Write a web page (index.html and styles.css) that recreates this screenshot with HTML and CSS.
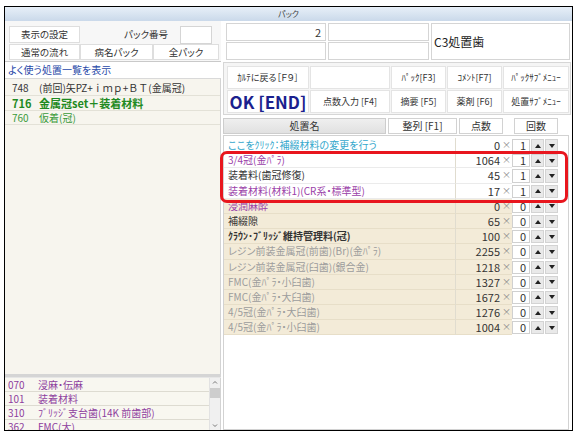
FILE: index.html
```html
<!doctype html>
<html lang="ja">
<head>
    <meta charset="UTF-8">
    <title>パック</title>
    <link rel="stylesheet" href="styles.css">
</head>
<body>
    <div class="window">
        <div class="titleBar">パック</div>
        <div class="packBody">
            <div class="leftPane">
                <div class="setRow">
                    <div class="btn setBtn">表示の設定</div>
                    <div class="packLabel">パック番号</div>
                    <div class="field packNo"></div>
                </div>
                <div class="tabRow">
                    <div class="btn tabA">通常の流れ</div>
                    <div class="btn tabB">病名パック</div>
                    <div class="btn tabC">全パック</div>
                </div>
                <div class="favLink">よく使う処置一覧を表示</div>
                <div class="favList">
                    <div class="favItem"><span class="code">748</span><span class="wide">(前回)矢PZ+ｉｍｐ+ＢＴ(金属冠)</span></div>
                    <div class="favItem big"><span class="code">716</span>金属冠set＋装着材料</div>
                    <div class="favItem green"><span class="code">760</span>仮着(冠)</div>
                </div>
                <div class="splitter"></div>
                <div class="subList">
                    <div class="subRows">
                        <div class="subItem"><span class="code">070</span>浸麻・伝麻</div>
                        <div class="subItem"><span class="code">101</span>装着材料</div>
                        <div class="subItem"><span class="code">310</span>ﾌﾞﾘｯｼﾞ支台歯(14K 前歯部)</div>
                        <div class="subItem"><span class="code">362</span>FMC(大)</div>
                    </div>
                    <div class="scrollBar">
                        <svg class="scrollArrow" width="10" height="9" viewBox="0 0 10 9"><polyline points="3,5.5 5,3.5 7,5.5" fill="none" stroke="#777" stroke-width="1"/></svg>
                        <div class="scrollThumb"></div>
                        <svg class="scrollArrow down" width="10" height="9" viewBox="0 0 10 9"><polyline points="3,3.5 5,5.5 7,3.5" fill="none" stroke="#777" stroke-width="1"/></svg>
                    </div>
                </div>
            </div>

            <div class="rightPane">
                <div class="topFields">
                    <div class="field num">2</div>
                    <div class="field"></div>
                    <div class="field tooth">C3処置歯</div>
                    <div class="field"></div>
                    <div class="field"></div>
                </div>

                <div class="cmdPanel">
                    <div class="cmd">ｶﾙﾃに戻る［Ｆ９］</div>
                    <div class="cmd"></div>
                    <div class="cmd">ﾊﾟｯｸ[F3]</div>
                    <div class="cmd">ｺﾒﾝﾄ[F7]</div>
                    <div class="cmd">ﾊﾟｯｸｻﾌﾞﾒﾆｭｰ</div>
                    <div class="cmd okBtn">OK [END]</div>
                    <div class="cmd">点数入力 [F4]</div>
                    <div class="cmd">摘要 [F5]</div>
                    <div class="cmd">薬剤 [F6]</div>
                    <div class="cmd">処置ｻﾌﾞﾒﾆｭｰ</div>
                </div>

                <div class="tableHead">
                    <div class="hName">処置名</div>
                    <div class="hBtn hSort">整列 [F1]</div>
                    <div class="hBtn hPts">点数</div>
                    <div class="hBtn hCnt">回数</div>
                </div>

                <div class="itemTable">
                    <div class="itemRow">
                        <span class="iName cyan">ここをｸﾘｯｸ：補綴材料の変更を行う</span>
                        <span class="iPts">0</span><span class="iX">×</span><span class="iCnt">1</span>
                        <span class="arrow up"></span><span class="arrow down"></span>
                    </div>
                    <div class="itemRow">
                        <span class="iName purple">3/4冠(金ﾊﾟﾗ)</span>
                        <span class="iPts">1064</span><span class="iX">×</span><span class="iCnt">1</span>
                        <span class="arrow up"></span><span class="arrow down"></span>
                    </div>
                    <div class="itemRow">
                        <span class="iName">装着料(歯冠修復)</span>
                        <span class="iPts">45</span><span class="iX">×</span><span class="iCnt">1</span>
                        <span class="arrow up"></span><span class="arrow down"></span>
                    </div>
                    <div class="itemRow">
                        <span class="iName purple">装着材料(材料1)(CR系・標準型)</span>
                        <span class="iPts">17</span><span class="iX">×</span><span class="iCnt">1</span>
                        <span class="arrow up"></span><span class="arrow down"></span>
                    </div>
                    <div class="itemRow tan">
                        <span class="iName purple">浸潤麻酔</span>
                        <span class="iPts">0</span><span class="iX">×</span><span class="iCnt">0</span>
                        <span class="arrow up"></span><span class="arrow down"></span>
                    </div>
                    <div class="itemRow tan">
                        <span class="iName">補綴隙</span>
                        <span class="iPts">65</span><span class="iX">×</span><span class="iCnt">0</span>
                        <span class="arrow up"></span><span class="arrow down"></span>
                    </div>
                    <div class="itemRow tan">
                        <span class="iName bold">ｸﾗｳﾝ･ﾌﾞﾘｯｼﾞ維持管理料(冠)</span>
                        <span class="iPts">100</span><span class="iX">×</span><span class="iCnt">0</span>
                        <span class="arrow up"></span><span class="arrow down"></span>
                    </div>
                    <div class="itemRow tan">
                        <span class="iName dim">レジン前装金属冠(前歯)(Br)(金ﾊﾟﾗ)</span>
                        <span class="iPts">2255</span><span class="iX">×</span><span class="iCnt">0</span>
                        <span class="arrow up"></span><span class="arrow down"></span>
                    </div>
                    <div class="itemRow tan">
                        <span class="iName dim">レジン前装金属冠(臼歯)(銀合金)</span>
                        <span class="iPts">1218</span><span class="iX">×</span><span class="iCnt">0</span>
                        <span class="arrow up"></span><span class="arrow down"></span>
                    </div>
                    <div class="itemRow tan">
                        <span class="iName dim">FMC(金ﾊﾟﾗ・小臼歯)</span>
                        <span class="iPts">1327</span><span class="iX">×</span><span class="iCnt">0</span>
                        <span class="arrow up"></span><span class="arrow down"></span>
                    </div>
                    <div class="itemRow tan">
                        <span class="iName dim">FMC(金ﾊﾟﾗ・大臼歯)</span>
                        <span class="iPts">1672</span><span class="iX">×</span><span class="iCnt">0</span>
                        <span class="arrow up"></span><span class="arrow down"></span>
                    </div>
                    <div class="itemRow tan">
                        <span class="iName dim">4/5冠(金ﾊﾟﾗ・大臼歯)</span>
                        <span class="iPts">1276</span><span class="iX">×</span><span class="iCnt">0</span>
                        <span class="arrow up"></span><span class="arrow down"></span>
                    </div>
                    <div class="itemRow tan">
                        <span class="iName dim">4/5冠(金ﾊﾟﾗ・小臼歯)</span>
                        <span class="iPts">1004</span><span class="iX">×</span><span class="iCnt">0</span>
                        <span class="arrow up"></span><span class="arrow down"></span>
                    </div>
                </div>

                <div class="highlight"></div>
            </div>
        </div>
    </div>
</body>
</html>
```

FILE: styles.css
```css
body {
    margin: 0;
    background-color: #ffffff;
    font-family: "Noto Sans CJK JP", "Noto Sans", sans-serif;
    font-feature-settings: "palt";
    font-size: 10px;
    color: #333333;
}

.window {
    margin: 6px 0 0 4px;
    width: 569px;
    height: 425px;
    box-sizing: border-box;
    border: 1px solid #000000;
    display: flex;
    flex-direction: column;
    background-color: #ffffff;
}

.titleBar {
    height: 14px;
    line-height: 14px;
    font-size: 8px;
    text-align: center;
    color: #444444;
    background: linear-gradient(#e7eff8, #cad9ea);
}

.packBody {
    flex: 1;
    display: flex;
    min-height: 0;
}

/* left side */

.leftPane {
    width: 216px;
    display: flex;
    flex-direction: column;
    background-color: #f7f7f7;
}

.btn {
    box-sizing: border-box;
    background-color: #ffffff;
    border: 1px solid #dedede;
    text-align: center;
    font-size: 9.5px;
    color: #333333;
}

.setRow {
    display: flex;
    align-items: flex-start;
    height: 18px;
    padding: 5px 0 0 4px;
}

.setBtn {
    width: 71px;
    height: 17px;
    line-height: 15px;
}

.packLabel {
    flex: 1;
    text-align: right;
    padding-right: 12px;
    line-height: 17px;
    font-size: 9.5px;
}

.packNo {
    width: 32px;
    height: 18px;
    margin-right: 9px;
}

.tabRow {
    display: flex;
    padding-left: 4px;
    height: 16px;
}

.tabRow .btn {
    height: 16px;
    line-height: 14px;
}

.tabA { width: 71px; }
.tabB { width: 73px; }
.tabC { width: 66px; }

.favLink {
    margin-top: 1px;
    height: 16px;
    line-height: 16px;
    padding-left: 3px;
    border-top: 1px solid #c9c9c9;
    background-color: #ffffff;
    color: #2748a8;
    font-size: 10px;
}

.favList {
    flex: 1;
    padding-top: 1px;
    background-color: #f7f5ee;
    border-top: 1px solid #d9d9d9;
    border-right: 1px solid #d3d3d3;
}

.favItem {
    display: flex;
    height: 15px;
    line-height: 15px;
    padding-left: 7px;
    border-bottom: 1px solid #e3e1d7;
    font-size: 10px;
    white-space: nowrap;
}

.favItem .code {
    width: 27px;
}

.favItem .wide {
    font-feature-settings: normal;
}

.favItem.big {
    height: 14px;
    line-height: 14px;
    font-size: 11px;
    font-weight: bold;
    color: #1f8a22;
}

.favItem.green {
    height: 13px;
    line-height: 13px;
    color: #3a9a3a;
}

.splitter {
    height: 3px;
    background-color: #d5d5d5;
    border-bottom: 1px solid #e6e6e6;
}

.subList {
    display: flex;
    height: 52px;
    overflow: hidden;
    background-color: #f8f7f0;
    border-right: 1px solid #d3d3d3;
}

.subRows {
    flex: 1;
}

.subItem {
    display: flex;
    height: 13px;
    line-height: 13px;
    padding-left: 3px;
    border-bottom: 1px solid #dddbd1;
    color: #8e3e9e;
    font-size: 10px;
    white-space: nowrap;
}

.subItem .code {
    width: 30px;
}

.scrollBar {
    width: 10px;
    display: flex;
    flex-direction: column;
    background-color: #f0f0f0;
    border-left: 1px solid #e2e2e2;
}

.scrollThumb {
    margin-top: 1px;
    height: 10px;
    background-color: #cdcdcd;
}

.scrollArrow.down {
    margin-top: auto;
}

/* right side */

.rightPane {
    flex: 1;
    position: relative;
    display: flex;
    flex-direction: column;
    margin: 0 1px 0 2px;
}

.field {
    box-sizing: border-box;
    background-color: #ffffff;
    border: 1px solid #d5d5d5;
    font-size: 11px;
    line-height: 16px;
}

.topFields {
    display: grid;
    grid-template-columns: 100px 101px 1fr;
    grid-template-rows: 18px 18px;
    column-gap: 2px;
    row-gap: 1px;
    padding: 2px 1px 0 3px;
}

.num {
    text-align: right;
    padding-right: 4px;
}

.tooth {
    grid-column: 3;
    grid-row: 1 / span 2;
    display: flex;
    align-items: center;
    padding-left: 2px;
    font-size: 12px;
    color: #222222;
}

.cmdPanel {
    margin-top: 2px;
    display: grid;
    grid-template-columns: 82px 80px 55px 55px 66px;
    grid-template-rows: 23px 23px;
    gap: 1px;
    padding: 3px 1px 1px 3px;
    border: 1px solid #d6d6d6;
    background-color: #f5f5f5;
}

.cmd {
    display: flex;
    align-items: center;
    justify-content: center;
    background-color: #ffffff;
    border: 1px solid #e4e4e4;
    font-size: 9px;
    color: #333333;
    white-space: nowrap;
}

.okBtn {
    font-size: 17px;
    font-weight: bold;
    color: #1b1f8e;
}

.tableHead {
    display: flex;
    height: 16px;
    margin-top: 3px;
    font-size: 10px;
    line-height: 14px;
}

.tableHead > div {
    box-sizing: border-box;
    text-align: center;
}

.hName {
    width: 163px;
    background: linear-gradient(#efefef, #e1e1e1);
    border: 1px solid #cdcdcd;
}

.hBtn {
    background-color: #ffffff;
    border: 1px solid #d2d2d2;
}

.hSort { width: 69px; margin-left: 2px; }
.hPts { width: 44px; margin-left: 2px; }
.hCnt { width: 44px; margin-left: 11px; }

.itemTable {
    flex: 1;
    margin: 1px 2px 0 0;
    padding-top: 2px;
    border: 1px solid #d2d2d2;
    background-color: #ffffff;
}

.itemRow {
    display: grid;
    grid-template-columns: 232px 46px 10px 18px 14px 14px;
    height: 15.2px;
    line-height: 14px;
    white-space: nowrap;
}

.itemRow > span {
    box-sizing: border-box;
}

.iName,
.iPts,
.iX {
    border-bottom: 1px solid #ebebeb;
}

.tan .iName,
.tan .iPts,
.tan .iX {
    background-color: #f3ebd8;
    border-bottom-color: #e7dec8;
}

.iName {
    padding-left: 4px;
    overflow: hidden;
    border-right: 1px solid #e0dccf;
    font-size: 10px;
}

.iName.cyan { color: #33a7cc; }
.iName.purple { color: #9a40a8; }
.iName.dim { color: #9c9c9c; }
.iName.bold { font-weight: bold; color: #333333; }

.iPts {
    text-align: right;
    padding-right: 2px;
    font-size: 11px;
}

.iX {
    font-size: 9px;
    color: #888888;
}

.iCnt {
    margin: 1px 0;
    background-color: #ffffff;
    border: 1px solid #d0d0d0;
    text-align: right;
    padding-right: 3px;
    font-size: 11px;
    line-height: 11px;
}

.arrow {
    margin: 1px 0 1px 1px;
    display: flex;
    align-items: center;
    justify-content: center;
    background-color: #e9e9e9;
    border: 1px solid #d3d3d3;
}

.arrow::before {
    content: "";
    border-left: 3px solid transparent;
    border-right: 3px solid transparent;
}

.arrow.up::before {
    border-bottom: 4px solid #222222;
}

.arrow.down::before {
    border-top: 4px solid #222222;
}

.highlight {
    position: absolute;
    left: -3px;
    top: 130px;
    width: 348px;
    height: 52px;
    box-sizing: border-box;
    border: 3px solid #e8161e;
    border-radius: 7px;
}
```
